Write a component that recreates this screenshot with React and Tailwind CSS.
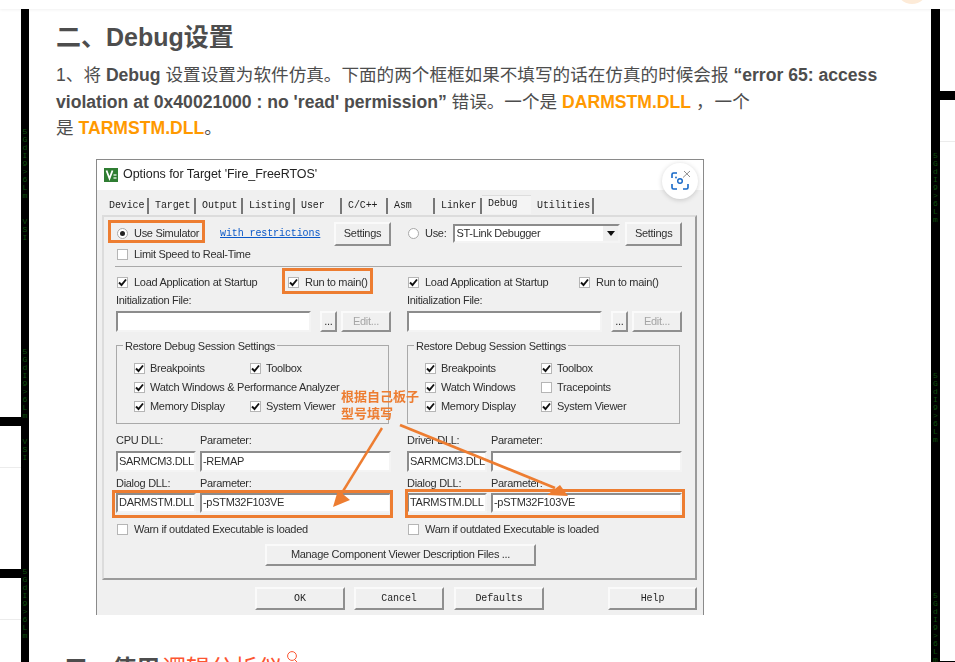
import React from "react";

const tabs = [
  { label: "Device", w: "w-[46px]" },
  { label: "Target", w: "w-[47px]" },
  { label: "Output", w: "w-[47px]" },
  { label: "Listing", w: "w-[52px]" },
  { label: "User", w: "w-[47px]" },
  { label: "C/C++", w: "w-[46px]" },
  { label: "Asm", w: "w-[47px]" },
  { label: "Linker", w: "w-[47px]" },
  { label: "Debug", w: "w-[49px]", active: true },
  { label: "Utilities", w: "w-[63px]" },
];

const GLYPHS = ["5", "G", "d", "I", "9", ">", "6", "L", "m"];

const GlyphStack = ({ chars = GLYPHS, className = "" }) => (
  <div className={`flex flex-col items-center text-[8px] leading-[8px] text-[#0a4f0a] [font-family:'Liberation_Mono',monospace] ${className}`}>
    {chars.map((c, i) => (
      <span key={i}>{c}</span>
    ))}
  </div>
);

const Check = ({ on = true, className = "mr-[6px]" }) => (
  <span className={`ml-[1px] w-[11px] h-[11px] shrink-0 bg-white border border-[#b5b5b5] flex items-center justify-center ${className}`}>
    {on && (
      <svg width="9" height="9" viewBox="0 0 9 9" fill="none">
        <path d="M1 4.5 L3.5 7 L8 1.5" stroke="#111" strokeWidth="1.9" />
      </svg>
    )}
  </span>
);

const Radio = ({ on }) => (
  <span className="ml-[1px] mr-[6px] w-[11px] h-[11px] shrink-0 rounded-full bg-white border border-[#a8a8a8] flex items-center justify-center">
    {on && <span className="w-[5px] h-[5px] rounded-full bg-[#222]" />}
  </span>
);

const Sunken = ({ children, className = "" }) => (
  <div className={`bg-white border-2 border-t-[#8c8c8c] border-l-[#8c8c8c] border-r-[#f4f4f4] border-b-[#f4f4f4] flex items-center pl-[1px] overflow-hidden whitespace-nowrap ${className}`}>
    {children}
  </div>
);

const Btn = ({ children, className = "" }) => (
  <div className={`bg-[#f0f0f0] border-2 border-t-[#fafafa] border-l-[#fafafa] border-r-[#8f8f8f] border-b-[#8f8f8f] flex items-center justify-center whitespace-nowrap ${className}`}>
    {children}
  </div>
);

const CheckRow = ({ label, on = true, className = "" }) => (
  <div className={`flex items-center ${className}`}>
    <Check on={on} className="mr-[5px]" />
    <span>{label}</span>
  </div>
);

const GroupBox = ({ rows }) => (
  <div className="relative mt-[13px] w-[273px] h-[79px] border border-[#a9a9a9] pt-[13px] pl-[16px]">
    <span className="absolute -top-[8px] left-[6px] bg-[#f0f0f0] px-[2px] whitespace-nowrap">Restore Debug Session Settings</span>
    {rows.map((r, i) => (
      <div key={i} className="flex h-[19px] items-center">
        <CheckRow label={r[0]} className="w-[116px] whitespace-nowrap" />
        {r[1] && <CheckRow label={r[1].label} on={r[1].on} className="whitespace-nowrap" />}
      </div>
    ))}
  </div>
);

const LowerColumn = ({ rows, dllLabel, dll1, param1, dll2, param2 }) => (
  <div className="w-[275px]">
    <div className="flex h-[16px] items-center">
      <div className="flex items-center w-[171px]">
        <Check />
        <span>Load Application at Startup</span>
      </div>
      <div className="flex items-center">
        <Check />
        <span>Run to main()</span>
      </div>
    </div>
    <div className="mt-[2px] h-[14px] leading-[14px]">Initialization File:</div>
    <div className="mt-[4px] flex h-[21px]">
      <Sunken className="w-[195px]" />
      <Btn className="ml-[9px] w-[17px]">...</Btn>
      <Btn className="ml-[4px] w-[50px] text-[#a5a5a5]">Edit...</Btn>
    </div>
    <GroupBox rows={rows} />
    <div className="mt-[9px] flex h-[14px] leading-[14px]">
      <span className="w-[84px]">{dllLabel}</span>
      <span>Parameter:</span>
    </div>
    <div className="mt-[4px] flex h-[21px] gap-[4px]">
      <Sunken className="w-[80px]">{dll1}</Sunken>
      <Sunken className="w-[191px]">{param1}</Sunken>
    </div>
    <div className="mt-[4px] flex h-[14px] leading-[14px]">
      <span className="w-[84px]">Dialog DLL:</span>
      <span>Parameter:</span>
    </div>
    <div className="mt-[3px] flex h-[20px] gap-[4px]">
      <Sunken className="w-[80px]">{dll2}</Sunken>
      <Sunken className="w-[191px]">{param2}</Sunken>
    </div>
    <div className="mt-[9px] flex h-[16px] items-center">
      <Check on={false} />
      <span>Warn if outdated Executable is loaded</span>
    </div>
  </div>
);

const DebugDialog = () => (
  <div className="relative w-[608px] h-[456px] bg-[#f0f0f0] border-x border-t border-[#8a8a8a] text-[11px] text-[#2f2f2f] tracking-[-0.3px] [font-family:'Liberation_Sans',Arial,sans-serif] blur-[0.4px] overflow-hidden">
    {/* title bar */}
    <div className="h-[30px] bg-white flex items-center pl-[7px]">
      <svg width="14" height="14" viewBox="0 0 14 14" className="shrink-0">
        <rect width="14" height="14" fill="#2f7d32" />
        <path d="M2.5 2.5 L5.5 10.5 L8.5 2.5" fill="none" stroke="#fff" strokeWidth="1.8" />
        <path d="M9.5 7 h3 M9.5 10 h3" stroke="#d9ead9" strokeWidth="1.3" />
      </svg>
      <span className="ml-[5px] text-[12.5px] tracking-[-0.05px] text-[#222]">Options for Target 'Fire_FreeRTOS'</span>
    </div>

    {/* tabs */}
    <div className="mt-[8px] ml-[6px] flex h-[17px] items-center text-[10px] tracking-[-0.1px] text-[#1f1f1f] [font-family:'Liberation_Mono',monospace]">
      {tabs.map((t) => (
        <div
          key={t.label}
          className={`${t.w} pl-[6px] leading-[16px] ${t.active ? "bg-[#f4f4f4] border-t border-[#ddd] -mt-[4px] h-[19px]" : "h-[16px] border-r-2 border-[#777]"}`}
        >
          {t.label}
        </div>
      ))}
    </div>

    {/* debug page */}
    <div className="ml-[5px] w-[595px] h-[365px] border-2 border-t-[#dcdcdc] border-l-[#dcdcdc] border-r-[#9b9b9b] border-b-[#9b9b9b] pt-[5px] pl-[12px]">
      <div className="flex gap-[16px]">
        <div className="w-[275px]">
          <div className="flex h-[24px] items-center">
            <Radio on />
            <span className="w-[86px] shrink-0 whitespace-nowrap">Use Simulator</span>
            <a className="text-[10px] tracking-[-0.1px] text-[#0a58c8] underline whitespace-nowrap [font-family:'Liberation_Mono',monospace]">with restrictions</a>
            <Btn className="ml-auto w-[57px] h-[24px]">Settings</Btn>
          </div>
          <div className="mt-[1px] flex h-[16px] items-center">
            <Check on={false} />
            <span>Limit Speed to Real-Time</span>
          </div>
        </div>
        <div className="w-[275px]">
          <div className="flex h-[24px] items-center">
            <Radio />
            <span>Use:</span>
            <Sunken className="ml-[7px] w-[168px] h-[19px] relative">
              <span>ST-Link Debugger</span>
              <span className="absolute right-0 top-0 bottom-0 w-[15px] bg-[#f0f0f0] flex items-center justify-center">
                <svg width="8" height="5" viewBox="0 0 8 5"><path d="M0 0 H8 L4 5 Z" fill="#111" /></svg>
              </span>
            </Sunken>
            <Btn className="ml-[5px] w-[57px] h-[24px]">Settings</Btn>
          </div>
        </div>
      </div>

      <div className="mt-[3px] mb-[8px] ml-[-1px] w-[567px] h-[1px] bg-[#a9a9a9]" />

      <div className="flex gap-[16px]">
        <LowerColumn
          rows={[
            ["Breakpoints", { label: "Toolbox" }],
            ["Watch Windows & Performance Analyzer"],
            ["Memory Display", { label: "System Viewer" }],
          ]}
          dllLabel="CPU DLL:"
          dll1="SARMCM3.DLL"
          param1="-REMAP"
          dll2="DARMSTM.DLL"
          param2="-pSTM32F103VE"
        />
        <LowerColumn
          rows={[
            ["Breakpoints", { label: "Toolbox" }],
            ["Watch Windows", { label: "Tracepoints", on: false }],
            ["Memory Display", { label: "System Viewer" }],
          ]}
          dllLabel="Driver DLL:"
          dll1="SARMCM3.DLL"
          param1=""
          dll2="TARMSTM.DLL"
          param2="-pSTM32F103VE"
        />
      </div>

      <Btn className="mt-[6px] ml-[149px] w-[271px] h-[22px]">Manage Component Viewer Description Files ...</Btn>
    </div>

    {/* bottom buttons */}
    <div className="mt-[7px] ml-[158px] flex h-[23px] text-[10px] tracking-[-0.1px] text-[#1f1f1f] [font-family:'Liberation_Mono',monospace]">
      <Btn className="w-[90px]">OK</Btn>
      <Btn className="ml-[9px] w-[90px]">Cancel</Btn>
      <Btn className="ml-[10px] w-[90px]">Defaults</Btn>
      <Btn className="ml-[64px] w-[89px]">Help</Btn>
    </div>

    {/* orange annotations drawn on the screenshot */}
    <div className="absolute left-[11px] top-[60px] w-[97px] h-[23px] border-[3px] border-[#ed7d31]" />
    <div className="absolute left-[185px] top-[108px] w-[91px] h-[26px] border-[3px] border-[#ed7d31]" />
    <div className="absolute left-[15px] top-[330px] w-[281px] h-[28px] border-[3px] border-[#ed7d31]" />
    <div className="absolute left-[308px] top-[329px] w-[280px] h-[29px] border-[3px] border-[#ed7d31]" />
    <div className="absolute left-[244px] top-[227px] w-[82px] text-[13px] leading-[17px] tracking-normal font-bold text-[#ed7d31] [font-family:'Noto_Sans_CJK_SC',sans-serif]">
      根据自己板子
      <br />
      型号填写
    </div>
    <svg className="absolute left-0 top-0" width="606" height="455" viewBox="0 0 606 455" fill="none">
      <path d="M285 268 L243 336" stroke="#ed7d31" strokeWidth="2.4" />
      <path d="M236 347 L241 330 L253 340 Z" fill="#ed7d31" />
      <path d="M303 265 L458 328" stroke="#ed7d31" strokeWidth="2.8" />
      <path d="M471 336 L463 325 L450 335 Z" fill="#ed7d31" />
    </svg>
  </div>
);

const ScanBadge = () => (
  <div className="absolute left-[566px] top-[4px] w-[36px] h-[36px] rounded-full bg-white shadow-[0_1px_5px_rgba(0,0,0,0.18)] flex items-center justify-center">
    <svg width="24" height="24" viewBox="0 0 24 24" fill="none">
      <path d="M9 4 H5.5 Q4 4 4 5.5 V9 M4 15 V18.5 Q4 20 5.5 20 H9 M15 20 H18.5 Q20 20 20 18.5 V15" stroke="#1668c7" strokeWidth="1.6" />
      <circle cx="12" cy="12" r="2.3" stroke="#1668c7" strokeWidth="1.4" />
      <circle cx="8" cy="8.5" r="0.9" fill="#1668c7" />
      <path d="M15 8.5 L22 2 M16 2 L22 8" stroke="#8d8d8d" strokeWidth="1" />
    </svg>
  </div>
);

const App = () => (
  <div className="relative w-[955px] h-[662px] overflow-hidden bg-white flex flex-col [font-family:'Liberation_Sans','Noto_Sans_CJK_SC',Arial,sans-serif]">
    <header className="relative z-10 h-[9px] shrink-0 bg-white shadow-[0_1px_3px_rgba(0,0,0,0.06)]">
      <div className="absolute left-[896px] -top-[28px] w-[32px] h-[32px] rounded-full bg-[#fdebd8]" />
    </header>

    <div className="flex flex-1 min-h-0">
      {/* left gutter */}
      <div className="w-[21px] shrink-0">
        <div className="mt-[408px] h-[9px] bg-black" />
        <div className="mt-[41px] h-[1px] bg-[#ececec]" />
        <div className="mt-[101px] h-[9px] bg-black" />
        <div className="mt-[41px] h-[1px] bg-[#ececec]" />
      </div>
      <div className="w-[8px] shrink-0 bg-black overflow-hidden">
        <GlyphStack className="mt-[119px]" />
        <GlyphStack chars={["V", "S", "I"]} className="mt-[18px]" />
        <GlyphStack className="mt-[106px]" />
        <GlyphStack chars={["V", "S", "I"]} className="mt-[18px]" />
        <GlyphStack className="mt-[106px]" />
      </div>

      {/* article */}
      <main className="w-[902px] shrink-0 pl-[27px] text-[#4d4d4d]">
        <h2 className="mt-[12px] text-[25px] leading-[32px] font-bold">二、Debug设置</h2>
        <p className="mt-[9px] w-[850px] text-[17.6px] leading-[26.5px]">
          1、将 <strong>Debug</strong> 设置设置为软件仿真。下面的两个框框如果不填写的话在仿真的时候会报 <strong>“error 65: access violation at 0x40021000 : no 'read' permission”</strong> 错误。一个是 <strong className="text-[#f90]">DARMSTM.DLL</strong> ，<span className="ml-[1px]">一个</span>
          <br />
          是 <strong className="text-[#f90]">TARMSTM.DLL</strong>。
        </p>
        <div className="relative mt-[17px] ml-[40px] w-[608px]">
          <DebugDialog />
          <ScanBadge />
        </div>
        <h2 className="mt-[38px] ml-[8px] text-[24px] leading-[32px] font-bold">
          三、使用<span className="ml-[2px] font-normal text-[#fc5531]">逻辑分析仪</span>
          <svg className="inline-block align-top ml-[3px] -mt-[3px]" width="14" height="14" viewBox="0 0 14 14" fill="none">
            <circle cx="7" cy="6" r="4.4" stroke="#fc5531" strokeWidth="1" />
            <path d="M10 10 L12 12" stroke="#fc5531" strokeWidth="1" />
          </svg>
        </h2>
      </main>

      {/* right gutter */}
      <div className="w-[9px] shrink-0 bg-black overflow-hidden">
        <GlyphStack className="mt-[143px]" />
        <GlyphStack className="mt-[148px]" />
        <GlyphStack className="mt-[148px]" />
      </div>
      <div className="w-[15px] shrink-0">
        <div className="mt-[82px] h-[9px] bg-black" />
        <div className="mt-[41px] h-[1px] bg-[#ececec]" />
        <div className="mt-[519px] h-[1px] bg-black" />
      </div>
    </div>
  </div>
);

export default App;
